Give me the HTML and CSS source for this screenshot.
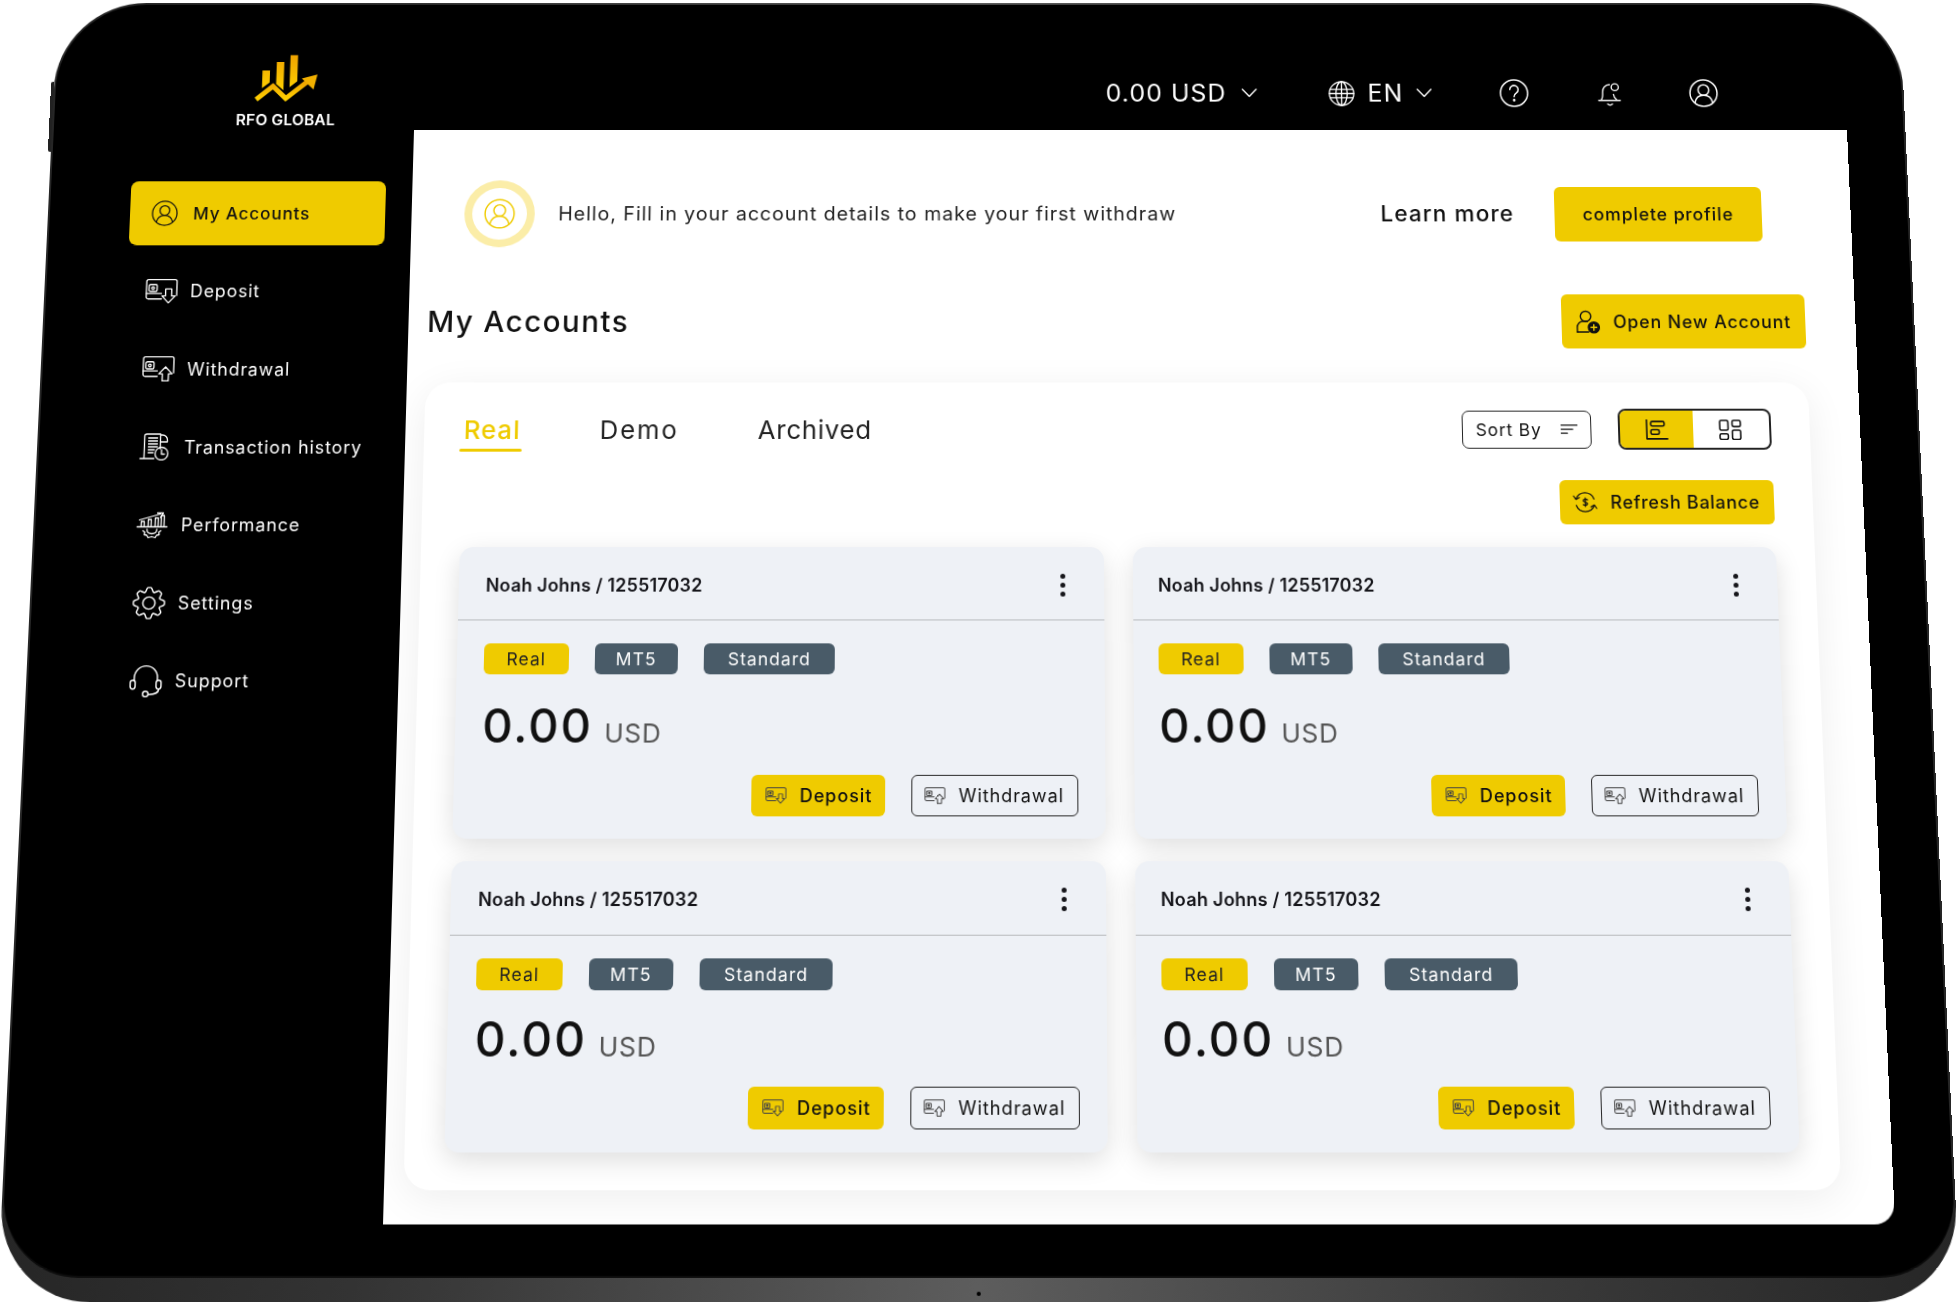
FILE: index.html
```html
<!DOCTYPE html>
<html lang="en">
<head>
<meta charset="utf-8">
<title>RFO Global</title>
<link rel="stylesheet" href="styles.css">
</head>
<body>
<svg class="defs" width="0" height="0" aria-hidden="true">
  <defs>
    <linearGradient id="gold" x1="0" y1="0" x2="0" y2="1"><stop offset="0" stop-color="#eea300"/><stop offset="1" stop-color="#ffd000"/></linearGradient>
    <symbol id="i-user" viewBox="0 0 28 28"><circle cx="14" cy="14" r="13"/><circle cx="14" cy="11" r="5.2"/><path d="M5.5 23.5c1-5 4.500-7.300 8.500-7.300s7.500 2.300 8.500 7.300"/></symbol>
    <symbol id="i-dep" viewBox="0 0 32 26"><path d="M16 20.500H3a2 2 0 0 1-2-2V3a2 2 0 0 1 2-2h26a2 2 0 0 1 2 2v14"/><path d="M1 15h15"/><rect x="3.500" y="6" width="8" height="7" rx="1.500"/><circle cx="7.500" cy="9.500" r="1.300"/><path d="M20 10.500h6v7h3.500l-6.500 7-6.500-7H20z"/></symbol>
    <symbol id="i-wd" viewBox="0 0 32 26"><path d="M15 20.500H3a2 2 0 0 1-2-2V3a2 2 0 0 1 2-2h26a2 2 0 0 1 2 2v14"/><path d="M1 15h14"/><rect x="3.500" y="6" width="8" height="7" rx="1.500"/><circle cx="7.500" cy="9.500" r="1.300"/><path d="M20 25v-7h-3.500l6.500-7 6.500 7H26v7z"/></symbol>
    <symbol id="i-hist" viewBox="0 0 32 28"><path d="M7 1h14v15M5 26V3a2 2 0 0 1 2-2M1 26h14"/><path d="M21 2h2a5 5 0 0 1 5 5v2h-7"/><path d="M9 5h9M9 8h9M9 11h9M9 14h9M9 17h6M9 20h5"/><circle cx="22.500" cy="21" r="6.500"/><path d="M22.500 17v4.500h3"/></symbol>
    <symbol id="i-perf" viewBox="0 0 32 28"><path d="M1 15.500h30M5 15.500V10h3v5.500M12 15.500V8h3v7.500M19 15.500V6.500h3v9M25 15.500V4h3v11.500"/><path d="M3 8.500 24 2.500M21 1.500l6 0-3 4.500"/><path d="M7 19.500l2 1.500-.5 2.500 2.500.5 1.500 2.500 3.500-1 3.500 1 1.500-2.500 2.500-.5-.5-2.500 2-1.500"/><path d="M11 18c0 3 2 4.500 5 4.500s5-1.500 5-4.500"/></symbol>
    <symbol id="i-gear" viewBox="-14.800 -14.800 29.600 29.600">
      <g id="tooth"><path d="M-4.020-9.700Q-3.200-9.800-3-11L-2.200-13Q-2-14-1-14H1Q2-14 2.200-13L3-11Q3.200-9.800 4.020-9.700"/></g>
      <use href="#tooth" transform="rotate(45)"/><use href="#tooth" transform="rotate(90)"/><use href="#tooth" transform="rotate(135)"/><use href="#tooth" transform="rotate(180)"/><use href="#tooth" transform="rotate(225)"/><use href="#tooth" transform="rotate(270)"/><use href="#tooth" transform="rotate(315)"/>
      <circle r="5.500"/>
    </symbol>
    <symbol id="i-head" viewBox="0 0 30 30"><path d="M4.500 15V12a10.500 10.500 0 0 1 21 0v3"/><rect x="1" y="14.500" width="4.500" height="8" rx="2.200"/><rect x="24.500" y="14.500" width="4.500" height="8" rx="2.200"/><path d="M27 22.500c0 3.500-3 4.500-9 5"/><circle cx="15" cy="27" r="2.500"/></symbol>
    <symbol id="i-chev" viewBox="0 0 18 10"><path d="M1.500 1 9 9l7.500-8"/></symbol>
    <symbol id="i-globe" viewBox="0 0 28 28"><circle cx="14" cy="14" r="13"/><ellipse cx="14" cy="14" rx="6" ry="13"/><path d="M14 1v26M2 9.500h24M1 14h26M2 18.500h24"/></symbol>
    <symbol id="i-help" viewBox="0 0 28 28"><circle cx="14" cy="14" r="13"/><path d="M10 10.500a4 4 0 1 1 6.200 3.300c-1.400.9-2.200 1.700-2.200 3.700"/><circle cx="14" cy="21" r=".6"/></symbol>
    <symbol id="i-bell" viewBox="0 0 26 28"><path d="M4 20.500c1.500-2 1.500-4 1.500-8A7.500 7.500 0 0 1 13 4.200"/><path d="M17 15c.3 2.500 1 4 3 5.500"/><path d="M1 21.500h23"/><path d="M10.500 25.500c1.500 1.500 3.500 1.500 5 0"/><circle cx="18.500" cy="7" r="3.800"/></symbol>
    <symbol id="i-add" viewBox="0 0 26 26"><circle cx="11" cy="7" r="5.500"/><path d="M2 24V19c0-4 3-6.500 6-6.500h5"/><path d="M2 24h12"/><circle cx="19.500" cy="19" r="5.800" fill="currentColor"/><path d="M19.500 16v6M16.500 19h6" stroke="#efcb00"/></symbol>
    <symbol id="i-sort" viewBox="0 0 18 12"><path d="M0 1h18M0 5.500h13M0 10h7"/></symbol>
    <symbol id="i-list" viewBox="0 0 22 20"><path d="M1 0v19h20"/><rect x="5" y="2" width="13" height="4.500" rx="1.500"/><rect x="5" y="10" width="8" height="4.500" rx="1.500"/></symbol>
    <symbol id="i-grid" viewBox="0 0 22 20"><rect x="1" y="1" width="8" height="9.500" rx="1.500"/><rect x="13" y="1" width="8" height="6" rx="1.500"/><rect x="1" y="14" width="8" height="5.500" rx="1.500"/><rect x="13" y="10.500" width="8" height="9" rx="1.500"/></symbol>
    <symbol id="i-refresh" viewBox="0 0 26 24"><path d="M3.600 8.600A10 10 0 0 1 22.400 8.600"/><path d="M22.400 15.400A10 10 0 0 1 3.600 15.400"/><path d="M1 5.500 3.400 9 7 7M25 18.500 22.600 15 19 17"/><path d="M15.500 9.500c-.6-1-4.500-1.200-4.500.9 0 2.200 4.500 1 4.500 3.200 0 2-3.900 1.800-4.500.9M13.200 7.500v9"/></symbol>
  </defs>
</svg>

<div class="tablet">
  <span class="side-btn"></span>
  <span class="camera"></span>
  <div class="face">
    <aside class="sidebar">
      <div class="logo">
        <svg class="logo-mark" viewBox="0 0 62 48"><path d="M7 15.700h7.500V28L7 34zM21 7h7.500v29L21 29.500zM34.500 0H42v27l-7.500 6z" fill="url(#gold)"/><path d="M1.500 45.500 18 32 31 44.500 52 27.500" fill="none" stroke="url(#gold)" stroke-width="5"/><path d="M62 20 58.500 35.500 46.500 24z" fill="#f2b000"/></svg>
        <span class="logo-text">RFO GLOBAL</span>
      </div>
      <nav class="nav">
        <a class="nav-item is-active"><svg class="ic nav-ic"><use href="#i-user"/></svg><span>My Accounts</span></a>
        <a class="nav-item"><svg class="ic nav-ic"><use href="#i-dep"/></svg><span>Deposit</span></a>
        <a class="nav-item"><svg class="ic nav-ic"><use href="#i-wd"/></svg><span>Withdrawal</span></a>
        <a class="nav-item"><svg class="ic nav-ic"><use href="#i-hist"/></svg><span>Transaction history</span></a>
        <a class="nav-item"><svg class="ic nav-ic"><use href="#i-perf"/></svg><span>Performance</span></a>
        <a class="nav-item"><svg class="ic nav-ic nav-big"><use href="#i-gear"/></svg><span>Settings</span></a>
        <a class="nav-item"><svg class="ic nav-ic nav-big"><use href="#i-head"/></svg><span>Support</span></a>
      </nav>
    </aside>

    <header class="topbar">
      <div class="top-group"><span class="balance">0.00 USD</span><svg class="ic chev"><use href="#i-chev"/></svg></div>
      <div class="top-group lang"><svg class="ic top-ic"><use href="#i-globe"/></svg><span class="balance">EN</span><svg class="ic chev"><use href="#i-chev"/></svg></div>
      <svg class="ic top-ic help"><use href="#i-help"/></svg>
      <svg class="ic top-ic bell"><use href="#i-bell"/></svg>
      <svg class="ic top-ic me"><use href="#i-user"/></svg>
    </header>

    <main class="screen">
      <section class="banner">
        <div class="ring"><svg class="ic ring-ic"><use href="#i-user"/></svg></div>
        <p class="hello">Hello, Fill in your account details to make your first withdraw</p>
        <a class="learn">Learn more</a>
        <button class="btn btn-profile">complete profile</button>
      </section>

      <section class="title-row">
        <h1 class="title">My Accounts</h1>
        <button class="btn btn-open"><svg class="ic open-ic"><use href="#i-add"/></svg>Open New Account</button>
      </section>

      <section class="panel">
        <div class="panel-top">
          <div class="tabs">
            <a class="tab is-on">Real</a>
            <a class="tab tab-demo">Demo</a>
            <a class="tab tab-arch">Archived</a>
          </div>
          <button class="sort">Sort By<svg class="ic sort-ic"><use href="#i-sort"/></svg></button>
          <div class="toggle">
            <span class="toggle-cell is-on"><svg class="ic tog-ic"><use href="#i-list"/></svg></span>
            <span class="toggle-cell"><svg class="ic tog-ic"><use href="#i-grid"/></svg></span>
          </div>
        </div>
        <div class="refresh-row">
          <button class="btn btn-refresh"><svg class="ic ref-ic"><use href="#i-refresh"/></svg>Refresh Balance</button>
        </div>

        <div class="cards">
          <article class="card">
            <div class="card-head"><span class="name">Noah Johns / 125517032</span><span class="dots"><i></i><i></i><i></i></span></div>
            <div class="card-body">
              <div class="badges"><span class="badge badge-y">Real</span><span class="badge badge-mt">MT5</span><span class="badge badge-st">Standard</span></div>
              <div class="amount">0.00 <small>USD</small></div>
              <div class="actions"><button class="act act-dep"><svg class="ic act-ic"><use href="#i-dep"/></svg>Deposit</button><button class="act act-wd"><svg class="ic act-ic"><use href="#i-wd"/></svg>Withdrawal</button></div>
            </div>
          </article>
          <article class="card">
            <div class="card-head"><span class="name">Noah Johns / 125517032</span><span class="dots"><i></i><i></i><i></i></span></div>
            <div class="card-body">
              <div class="badges"><span class="badge badge-y">Real</span><span class="badge badge-mt">MT5</span><span class="badge badge-st">Standard</span></div>
              <div class="amount">0.00 <small>USD</small></div>
              <div class="actions"><button class="act act-dep"><svg class="ic act-ic"><use href="#i-dep"/></svg>Deposit</button><button class="act act-wd"><svg class="ic act-ic"><use href="#i-wd"/></svg>Withdrawal</button></div>
            </div>
          </article>
          <article class="card">
            <div class="card-head"><span class="name">Noah Johns / 125517032</span><span class="dots"><i></i><i></i><i></i></span></div>
            <div class="card-body">
              <div class="badges"><span class="badge badge-y">Real</span><span class="badge badge-mt">MT5</span><span class="badge badge-st">Standard</span></div>
              <div class="amount">0.00 <small>USD</small></div>
              <div class="actions"><button class="act act-dep"><svg class="ic act-ic"><use href="#i-dep"/></svg>Deposit</button><button class="act act-wd"><svg class="ic act-ic"><use href="#i-wd"/></svg>Withdrawal</button></div>
            </div>
          </article>
          <article class="card">
            <div class="card-head"><span class="name">Noah Johns / 125517032</span><span class="dots"><i></i><i></i><i></i></span></div>
            <div class="card-body">
              <div class="badges"><span class="badge badge-y">Real</span><span class="badge badge-mt">MT5</span><span class="badge badge-st">Standard</span></div>
              <div class="amount">0.00 <small>USD</small></div>
              <div class="actions"><button class="act act-dep"><svg class="ic act-ic"><use href="#i-dep"/></svg>Deposit</button><button class="act act-wd"><svg class="ic act-ic"><use href="#i-wd"/></svg>Withdrawal</button></div>
            </div>
          </article>
        </div>
      </section>
    </main>
  </div>
</div>
</body>
</html>
```

FILE: styles.css
```css
* { box-sizing: border-box; }
html, body { margin: 0; height: 100%; background: #fff; overflow: hidden; }
body { font-family: "Inter", "Noto Sans", sans-serif; color: #111; }
.defs { position: absolute; }
button { font: inherit; color: inherit; border: 0; background: none; padding: 0; }
p, h1 { margin: 0; }

.ic { display: block; fill: none; stroke: currentColor; stroke-width: 1.3; stroke-linecap: round; stroke-linejoin: round; flex: none; overflow: visible; }

/* device: flat layout projected onto the photographed trapezoid */
.tablet {
  position: absolute; left: 0; top: 0;
  width: 1904px; height: 1303px;
  transform-origin: 0 0;
  transform: matrix3d(0.973505,0,0,0, -0.046628,0.941542,0,-0.00004776, 0,0,1,0, 414,130,0,1) translate(-372px,-135px);
  border-radius: 92px 92px 90px 90px;
  background: linear-gradient(90deg, #262626 0%, #333 18%, #5d5d5d 50%, #3a3a3a 78%, #262626 100%);
}
.side-btn { position: absolute; left: -3px; top: 84px; width: 3px; height: 74px; background: #222; border-radius: 2px 0 0 2px; }
.camera { position: absolute; left: 950px; top: 1293px; width: 4px; height: 4px; border-radius: 50%; background: #000; }
.face {
  position: relative;
  margin: 2px 2px 0;
  height: 1276px;
  background: #000;
  border-radius: 90px 90px 76px 76px;
  display: grid;
  grid-template-columns: 370px 1472px;
  grid-template-rows: 133px 1094px;
  box-shadow: 0 2px 0 #0c0c0c;
}

/* sidebar */
.sidebar { grid-row: 1 / 3; padding-left: 81.5px; color: #fff; }
.logo { position: relative; height: 187px; }
.logo-mark { position: absolute; left: 123px; top: 53px; width: 64px; height: 51px; }
.logo-text { position: absolute; left: 105px; top: 112px; font-size: 16px; font-weight: 600; white-space: nowrap; letter-spacing: .01em; }
.nav { display: flex; flex-direction: column; width: 261px; }
.nav-item { display: flex; align-items: center; gap: 13px; height: 67px; flex: none; padding-left: 19px; font-size: 18px; letter-spacing: .05em; }
.nav-item:nth-child(1) { margin-bottom: 14.300px; }
.nav-item:nth-child(2) { margin-bottom: 13.700px; }
.nav-item:nth-child(3) { margin-bottom: 13px; }
.nav-item:nth-child(4) { margin-bottom: 12.400px; }
.nav-item:nth-child(5) { margin-bottom: 11.900px; }
.nav-item:nth-child(6) { margin-bottom: 11.100px; }
.nav-ic { width: 33px; height: 28px; }
.nav-big { height: 33px; }
.is-active.nav-item { background: #efcb00; color: #111; border-radius: 8px; padding-left: 22px; gap: 16px; font-size: 17.500px; font-weight: 500; }
.is-active .nav-ic { width: 27px; height: 27px; }

/* top bar */
.topbar { display: flex; align-items: flex-end; justify-content: flex-end; padding: 0 131px 25px 0; color: #fff; }
.top-group { display: flex; align-items: center; gap: 15px; height: 28px; }
.lang { gap: 13px; margin-left: 73px; }
.balance { font-size: 25.500px; letter-spacing: .045em; line-height: 28px; }
.chev { width: 17px; height: 9.500px; stroke-width: 1.500; }
.top-ic { width: 27px; height: 27px; stroke-width: 1.400; }
.help, .me { width: 30px; height: 30px; margin-bottom: -1px; }
.help { margin-left: 69px; }
.bell { margin-left: 70px; }
.me { margin-left: 68px; }

/* screen */
.screen { background: #fff; padding: 54px 51px 0 19px; border-bottom-right-radius: 20px; overflow: hidden; box-shadow: 0 1px 0 #777; }
.banner { display: flex; align-items: center; height: 68px; padding-left: 35px; padding-right: 40px; }
.ring { width: 72px; height: 70px; border-radius: 50%; border: 8px solid #fbeda8; display: flex; align-items: center; justify-content: center; flex: none; }
.ring-ic { width: 32px; height: 32px; color: #efcb00; }
.hello { margin-left: 24px; font-size: 20px; letter-spacing: .05em; color: #222; width: 841px; white-space: nowrap; }
.learn { font-size: 23px; font-weight: 500; letter-spacing: .05em; width: 178px; white-space: nowrap; }
.btn { background: #efcb00; border-radius: 6px; font-weight: 500; display: flex; align-items: center; justify-content: center; white-space: nowrap; }
.btn-profile { width: 212px; height: 57px; font-size: 18px; letter-spacing: .05em; flex: none; }

.title-row { display: flex; align-items: center; justify-content: space-between; margin-top: 50px; height: 56px; }
.title { font-size: 30px; font-weight: 500; letter-spacing: .05em; }
.btn-open { width: 248px; height: 56px; font-size: 18px; letter-spacing: .05em; gap: 13px; }
.open-ic { width: 25px; height: 25px; stroke-width: 1.500; }

.panel { margin-top: 35px; height: 799px; padding: 27px 39px 36px 39px; background: #fff; border-radius: 26px; box-shadow: 0 8px 40px rgba(0,0,0,.07); }
.panel-top { display: flex; align-items: center; height: 42px; }
.tabs { display: flex; flex: 1; font-size: 26px; letter-spacing: .04em; }
.tab { position: relative; color: #222; }
.tab.is-on { color: #efcb00; font-weight: 500; margin-left: 1px; }
.tab.is-on::after { content: ""; position: absolute; left: -4px; right: -1px; top: 35px; height: 3.500px; border-radius: 2px; background: #efcb00; }
.tab-demo { margin-left: 80px; letter-spacing: .075em; }
.tab-arch { margin-left: 80px; letter-spacing: .03em; }
.sort { display: flex; align-items: center; justify-content: space-between; width: 131px; height: 39px; padding: 0 13px; border: 1.500px solid #222; border-radius: 7px; background: #fff; font-size: 17.500px; letter-spacing: .05em; }
.sort-ic { width: 17px; height: 11px; }
.toggle { display: flex; margin-left: 27px; width: 155px; height: 42px; border: 2px solid #222; border-radius: 8px; overflow: hidden; }
.toggle-cell { flex: 1; display: flex; align-items: center; justify-content: center; padding-right: 2px; }
.toggle-cell.is-on { background: #efcb00; flex: 0 0 74px; padding-right: 0; }
.tog-ic { width: 23px; height: 21px; stroke-width: 1.500; }

.refresh-row { display: flex; justify-content: flex-end; margin-top: 31px; }
.btn-refresh { width: 216px; height: 45px; font-size: 18px; letter-spacing: .04em; gap: 13px; justify-content: flex-start; padding-left: 13px; }
.ref-ic { width: 25px; height: 23px; }

.cards { display: grid; grid-template-columns: 648px 647px; grid-template-rows: 291px 282.500px; gap: 21.500px 29px; margin-top: 23px; }
.card { display: flex; flex-direction: column; background: #eef1f6; border-radius: 14px; box-shadow: 0 8px 26px rgba(0,0,0,.13); }
.card-head { flex: none; height: 74px; padding: 4px 39px 0 27px; display: flex; align-items: center; justify-content: space-between; border-bottom: 1.500px solid #b8babd; }
.card:nth-child(n+3) .card-head { height: 73px; }
.card:nth-child(even) .card-head { padding-left: 25px; }
.name { font-size: 18px; font-weight: 600; letter-spacing: .01em; color: #15151a; }
.dots { display: flex; flex-direction: column; gap: 3.500px; }
.dots i { width: 5.500px; height: 5.500px; border-radius: 50%; background: #15151a; }
.card-body { flex: 1; display: flex; flex-direction: column; justify-content: space-between; padding: 23px 27px 22px; }
.card:nth-child(n+3) .card-body { padding-top: 22px; }
.card:nth-child(even) .card-body { padding-left: 25px; }
.badges { display: flex; gap: 26px; }
.badge { height: 31px; border-radius: 6px; display: flex; align-items: center; justify-content: center; font-size: 17.500px; letter-spacing: .06em; }
.badge-y { width: 84.500px; background: #efcb00; color: #222; }
.badge-mt { width: 83.500px; background: #495b68; color: #fff; }
.badge-st { width: 131px; background: #495b68; color: #fff; }
.amount { font-size: 47px; line-height: 44px; letter-spacing: .04em; color: #111; margin-top: 10px; font-weight: 500; }
.amount small { font-size: 26px; font-weight: 400; color: #555; letter-spacing: .03em; margin-left: -3px; }
.actions { display: flex; justify-content: flex-end; gap: 26px; }
.act { height: 41.500px; border-radius: 6px; display: flex; align-items: center; gap: 13px; font-size: 18px; letter-spacing: .05em; color: #111; }
.act-dep { width: 133px; background: #efcb00; padding-left: 14px; font-weight: 500; }
.act-wd { width: 166px; border: 1.500px solid #2a2a2a; padding-left: 12px; }
.act-ic { width: 21px; height: 17px; stroke-width: 1.500; color: #444; }
```
